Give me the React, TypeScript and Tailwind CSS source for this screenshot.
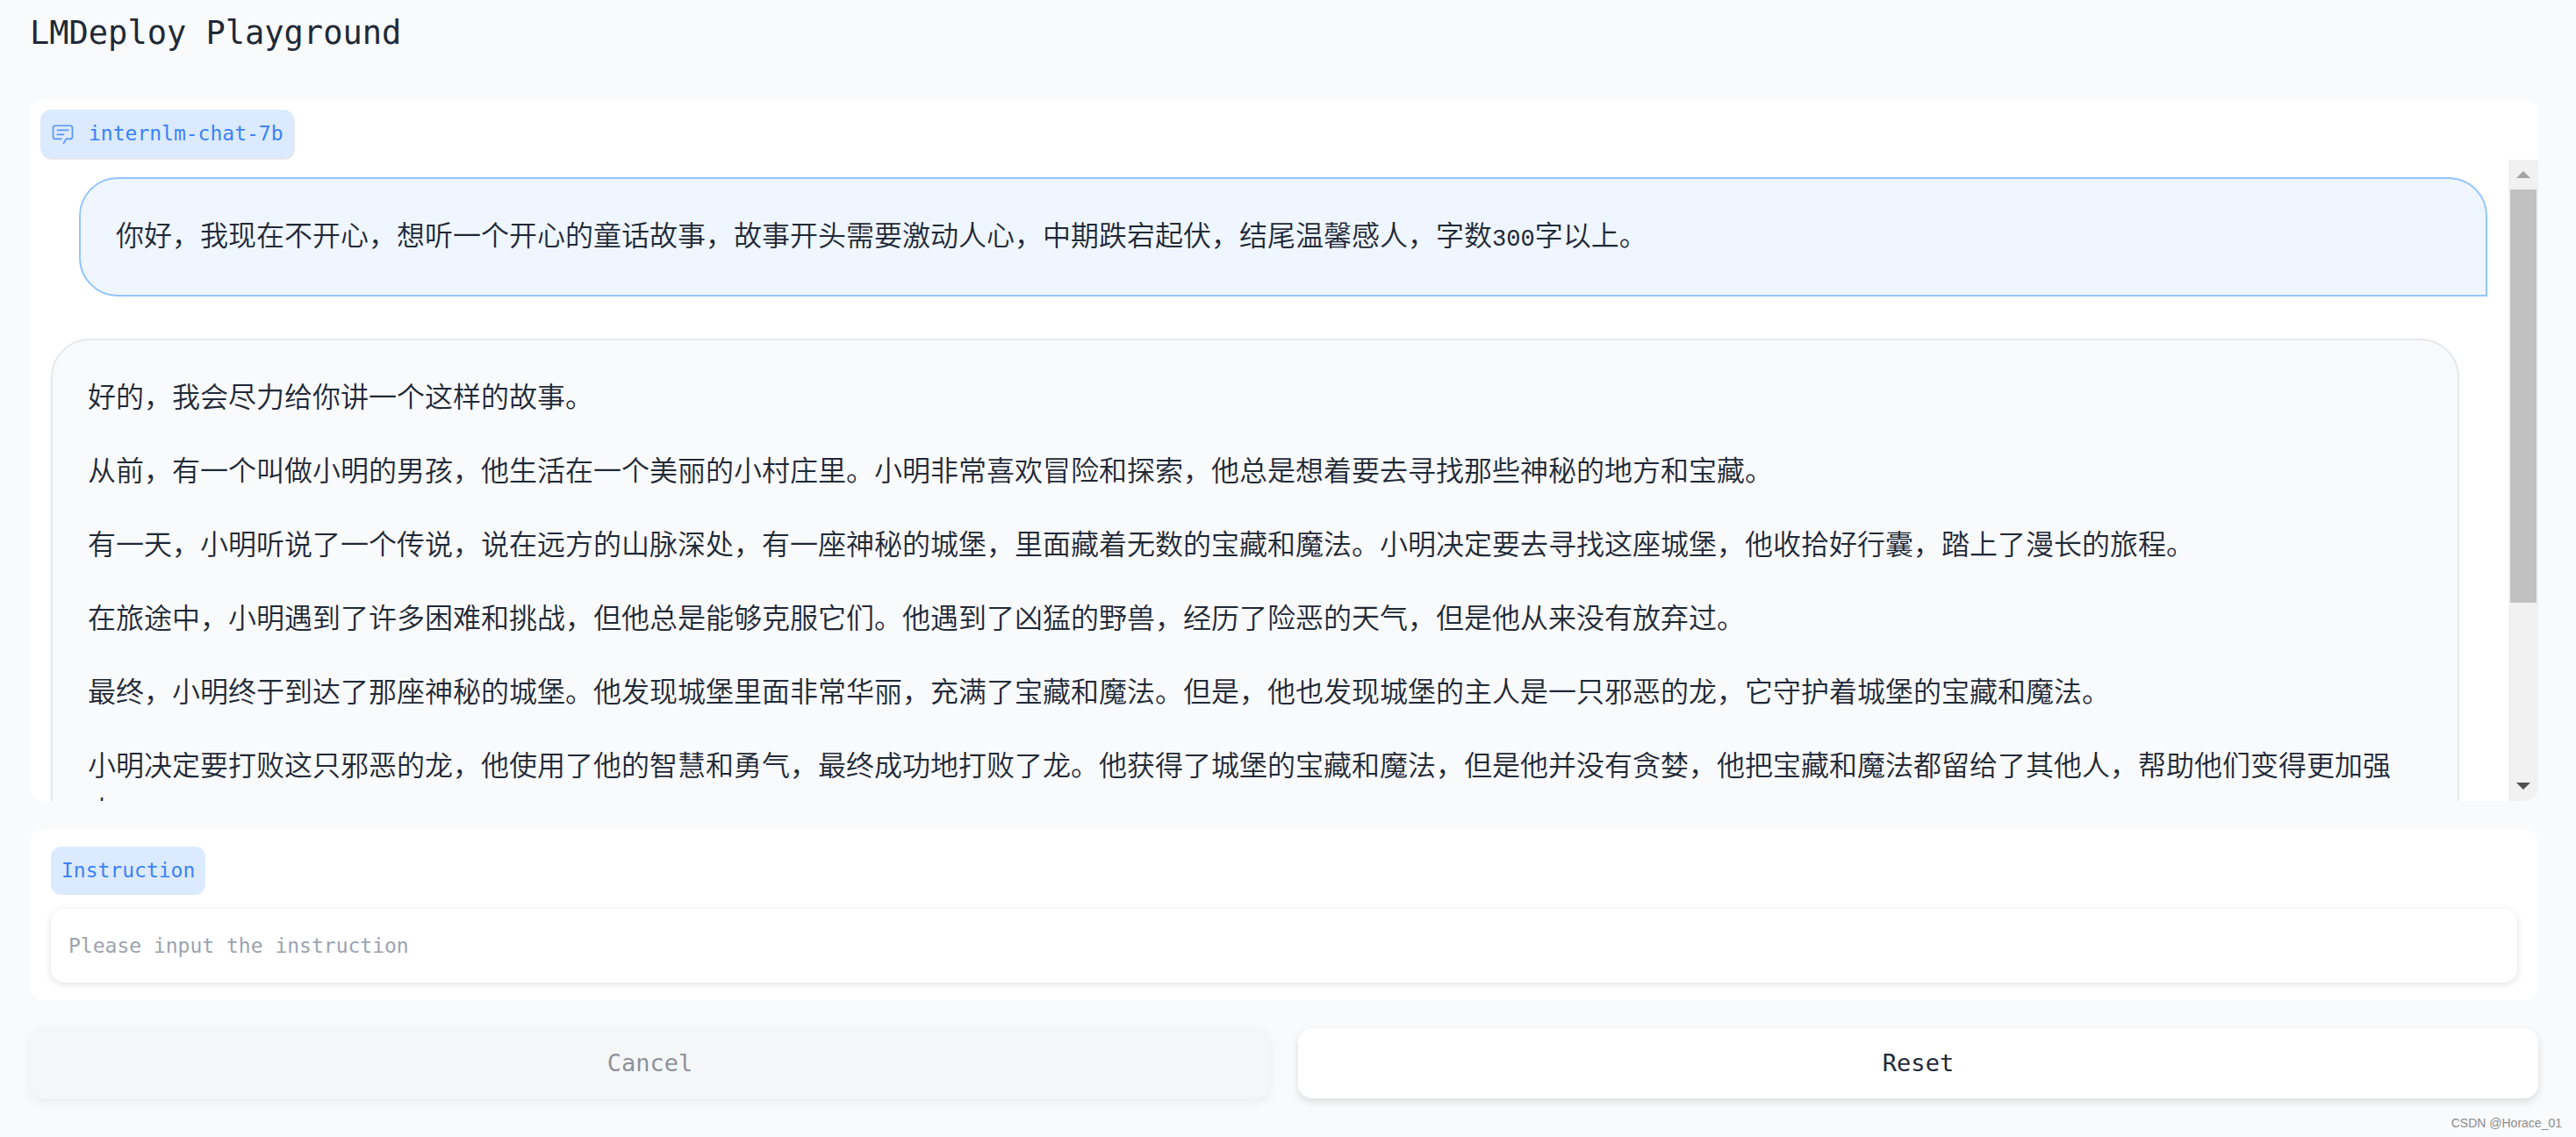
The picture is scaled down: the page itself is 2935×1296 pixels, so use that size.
import { useState } from 'react';
import clsx from 'clsx';

interface Message {
  role: 'user' | 'bot';
  paragraphs: string[];
}

const initialMessages: Message[] = [
  {
    role: 'user',
    paragraphs: [
      '你好，我现在不开心，想听一个开心的童话故事，故事开头需要激动人心，中期跌宕起伏，结尾温馨感人，字数300字以上。'
    ]
  },
  {
    role: 'bot',
    paragraphs: [
      '好的，我会尽力给你讲一个这样的故事。',
      '从前，有一个叫做小明的男孩，他生活在一个美丽的小村庄里。小明非常喜欢冒险和探索，他总是想着要去寻找那些神秘的地方和宝藏。',
      '有一天，小明听说了一个传说，说在远方的山脉深处，有一座神秘的城堡，里面藏着无数的宝藏和魔法。小明决定要去寻找这座城堡，他收拾好行囊，踏上了漫长的旅程。',
      '在旅途中，小明遇到了许多困难和挑战，但他总是能够克服它们。他遇到了凶猛的野兽，经历了险恶的天气，但是他从来没有放弃过。',
      '最终，小明终于到达了那座神秘的城堡。他发现城堡里面非常华丽，充满了宝藏和魔法。但是，他也发现城堡的主人是一只邪恶的龙，它守护着城堡的宝藏和魔法。',
      '小明决定要打败这只邪恶的龙，他使用了他的智慧和勇气，最终成功地打败了龙。他获得了城堡的宝藏和魔法，但是他并没有贪婪，他把宝藏和魔法都留给了其他人，帮助他们变得更加强大。'
    ]
  }
];

function ChatIcon() {
  return (
    <svg viewBox="0 0 32 32" className="h-[27px] w-[27px] opacity-80" fill="currentColor" aria-hidden="true">
      <path d="M17.74 30L16 29l4-7h6a2 2 0 0 0 2-2V8a2 2 0 0 0-2-2H6a2 2 0 0 0-2 2v12a2 2 0 0 0 2 2h9v2H6a4 4 0 0 1-4-4V8a4 4 0 0 1 4-4h20a4 4 0 0 1 4 4v12a4 4 0 0 1-4 4h-4.84Z" />
      <path d="M8 10h16v2H8zm0 6h10v2H8z" />
    </svg>
  );
}

// digits are set in the mono face, smaller than the Chinese text round them
function MessageText({ text }: { text: string }) {
  return (
    <p>
      {text.split(/(\d+)/).map((part, i) =>
        /^\d+$/.test(part) ? (
          <span key={i} className="font-['Liberation_Mono',monospace] text-[27px] leading-none">
            {part}
          </span>
        ) : (
          part
        )
      )}
    </p>
  );
}

function Bubble({ message }: { message: Message }) {
  return (
    <div
      className={clsx(
        'flex flex-col gap-8 rounded-[44px] border-2 px-10 pt-9 pb-11',
        message.role === 'user'
          ? 'ml-8 rounded-br-none border-[#93c5fd] bg-blue-50'
          : 'mr-8 rounded-bl-none border-gray-200 bg-gray-50'
      )}
    >
      {message.paragraphs.map((text, i) => (
        <MessageText key={i} text={text} />
      ))}
    </div>
  );
}

function Scrollbar() {
  return (
    <div className="flex w-[34px] shrink-0 flex-col bg-[#f1f1f1]" aria-hidden="true">
      <div className="flex h-[34px] items-center justify-center">
        <svg viewBox="0 0 16 8" className="h-2 w-4" fill="#a3a3a3">
          <path d="M8 0L16 8H0Z" />
        </svg>
      </div>
      <div className="min-h-0 flex-1 px-0.5">
        <div className="h-[71%] bg-[#c1c1c1]" />
      </div>
      <div className="flex h-[34px] items-center justify-center">
        <svg viewBox="0 0 16 8" className="h-2 w-4" fill="#505050">
          <path d="M0 0H16L8 8Z" />
        </svg>
      </div>
    </div>
  );
}

export default function App() {
  const [messages, setMessages] = useState(initialMessages);
  const [instruction, setInstruction] = useState('');

  const handleSubmit = (e: React.FormEvent) => {
    e.preventDefault();
    if (!instruction.trim()) return;
    setMessages([...messages, { role: 'user', paragraphs: [instruction] }]);
    setInstruction('');
  };

  return (
    <div className="relative flex h-screen flex-col bg-gray-50 pr-[43px] pb-11 pl-[34px] font-['DejaVu_Sans_Mono','Noto_Sans_CJK_SC',monospace] text-[#1f2937]">
      <h1 className="pt-4 pb-[53px] text-[37px] leading-[44px]">LMDeploy Playground</h1>

      <section className="flex min-h-0 flex-1 flex-col overflow-hidden rounded-2xl bg-white pt-3">
        <div className="mb-0.5 ml-3 flex h-[55px] items-center gap-4 self-start rounded-xl bg-blue-100 px-3 text-[23px] text-[#3b82f6] shadow-[1px_2px_0_#e5e7eb]">
          <ChatIcon />
          <span>internlm-chat-7b</span>
        </div>
        <div className="flex min-h-0 flex-1">
          <div className="flex min-w-0 flex-1 flex-col gap-12 overflow-y-auto px-6 pt-5 font-['Noto_Sans_CJK_SC',sans-serif] text-[32px] leading-[52px] font-[350] [scrollbar-width:none]">
            {messages.map((message, i) => (
              <Bubble key={i} message={message} />
            ))}
          </div>
          <Scrollbar />
        </div>
      </section>

      <form onSubmit={handleSubmit} className="mt-8 flex flex-col items-start gap-4 rounded-2xl bg-white px-6 py-5">
        <label
          htmlFor="instruction"
          className="flex h-[55px] items-center rounded-xl bg-blue-100 px-3 text-[23px] text-[#3b82f6]"
        >
          Instruction
        </label>
        <input
          id="instruction"
          type="text"
          value={instruction}
          onChange={(e) => setInstruction(e.target.value)}
          className="h-[84px] w-full rounded-2xl bg-white px-5 text-[23px] shadow-[0_2px_8px_rgba(0,0,0,0.12)] placeholder:text-[#9ca3af] focus:outline-none"
          placeholder="Please input the instruction"
        />
      </form>

      <div className="mt-8 grid grid-cols-2 gap-8 text-[27px]">
        <button
          type="button"
          disabled
          className="h-20 rounded-2xl bg-gray-100 shadow-[0_4px_10px_rgba(0,0,0,0.1)] disabled:opacity-50"
        >
          Cancel
        </button>
        <button
          type="button"
          onClick={() => setMessages([])}
          className="h-20 rounded-2xl bg-white shadow-[0_4px_10px_rgba(0,0,0,0.12)]"
        >
          Reset
        </button>
      </div>

      <span className="absolute right-4 bottom-1.5 font-['Liberation_Sans',sans-serif] text-[14px] leading-5 text-[#8c8c8c]">
        CSDN @Horace_01
      </span>
    </div>
  );
}
